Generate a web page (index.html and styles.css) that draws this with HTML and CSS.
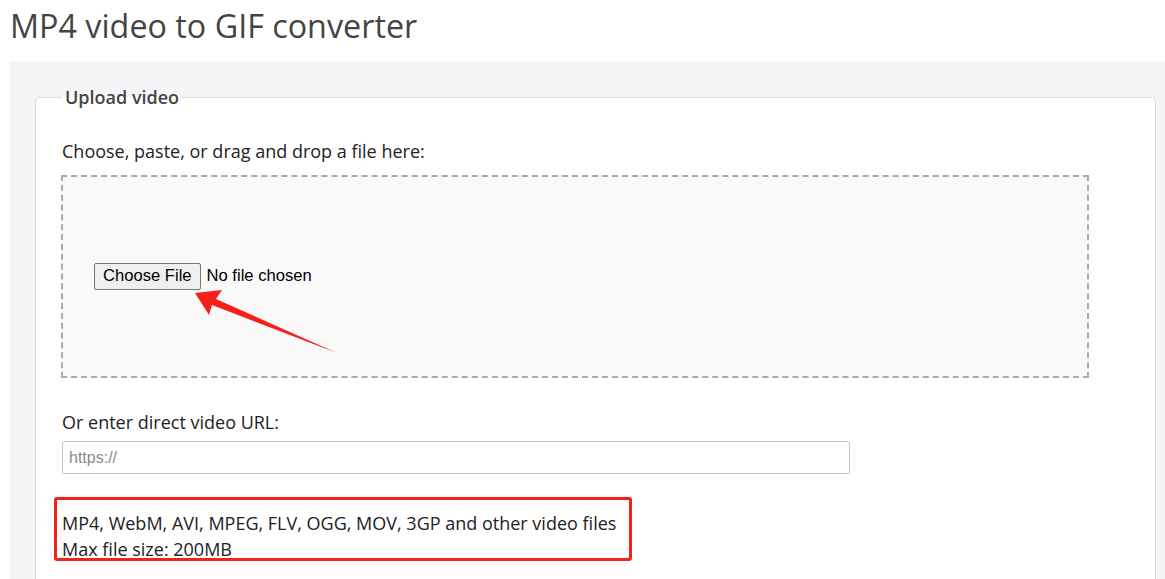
FILE: index.html
```html
<!DOCTYPE html>
<html>
<head>
<meta charset="utf-8">
<title>MP4 video to GIF converter</title>
<link rel="stylesheet" href="styles.css">
</head>
<body>
<h1 class="title">MP4 video to GIF converter</h1>
<div class="panel">
  <fieldset class="upload">
    <legend class="legend">Upload video</legend>
    <div class="label">Choose, paste, or drag and drop a file here:</div>
    <div class="dropzone">
      <input class="file" type="file">
      <svg class="arrow" width="160" height="80" viewBox="0 0 160 80">
        <polygon points="0,5 27,2 21,11 142,65 17,17 14,27" fill="#f5201a"/>
      </svg>
    </div>
    <div class="label url-label">Or enter direct video URL:</div>
    <input class="url" type="text" placeholder="https://">
    <div class="info">
      <div>MP4, WebM, AVI, MPEG, FLV, OGG, MOV, 3GP and other video files</div>
      <div>Max file size: 200MB</div>
    </div>
  </fieldset>
</div>
</body>
</html>
```
FILE: styles.css
```css
html, body {
  margin: 0;
  padding: 0;
  background: #fff;
  overflow: hidden;
}
body {
  padding-left: 10px;
  font-family: "Open Sans", "Noto Sans", sans-serif;
  color: #222;
}
.title {
  margin: 0;
  padding-top: 3px;
  height: 58px;
  font-weight: 400;
  font-size: 32.3px;
  line-height: 44px;
  color: #444;
}
.panel {
  background: #f4f5f7;
  padding: 24px 9px 0 25px;
  height: 520px;
}
.upload {
  margin: 0;
  background: #fff;
  border: 1px solid #dcdcdc;
  border-radius: 4px;
  padding: 29px 26px 40px 26px;
  min-width: 0;
}
.legend {
  font-size: 18px;
  font-weight: 600;
  color: #444;
  padding: 0 3px;
}
.label {
  font-size: 18px;
  line-height: 26px;
  color: #222;
}
.dropzone {
  position: relative;
  margin-top: 11px;
  margin-left: -1px;
  width: 993px;
  height: 199px;
  border: 2px dashed #aaa;
  background: #f9f9f9;
  display: flex;
  align-items: center;
  padding-left: 31px;
  box-sizing: content-box;
}
.file {
  font-family: "Liberation Sans", Arial, sans-serif;
  font-size: 16.6px;
  color: #000;
}
.file::file-selector-button {
  font-family: "Liberation Sans", Arial, sans-serif;
  font-size: 16.6px;
  padding: 2px 8px 3px;
  margin-right: 6px;
  background: #efefef;
  border: 1px solid #767676;
  border-radius: 2px;
  color: #000;
}
.arrow {
  position: absolute;
  left: 132px;
  top: 111px;
}
.url-label {
  margin-top: 31px;
}
.url {
  display: block;
  margin-top: 6px;
  width: 788px;
  height: 33px;
  box-sizing: border-box;
  border: 1px solid #c4c4c4;
  border-radius: 2px;
  padding: 0 6px;
  font-family: "Liberation Sans", Arial, sans-serif;
  font-size: 16px;
  color: #333;
}
.url::placeholder {
  color: #8a8a8a;
}
.info {
  margin-top: 23px;
  margin-left: -8px;
  width: 578px;
  height: 64px;
  box-sizing: border-box;
  border: 3px solid #f5201a;
  border-radius: 3px;
  padding: 10px 5px 0 5px;
  font-size: 18px;
  line-height: 26px;
  color: #222;
}
```
